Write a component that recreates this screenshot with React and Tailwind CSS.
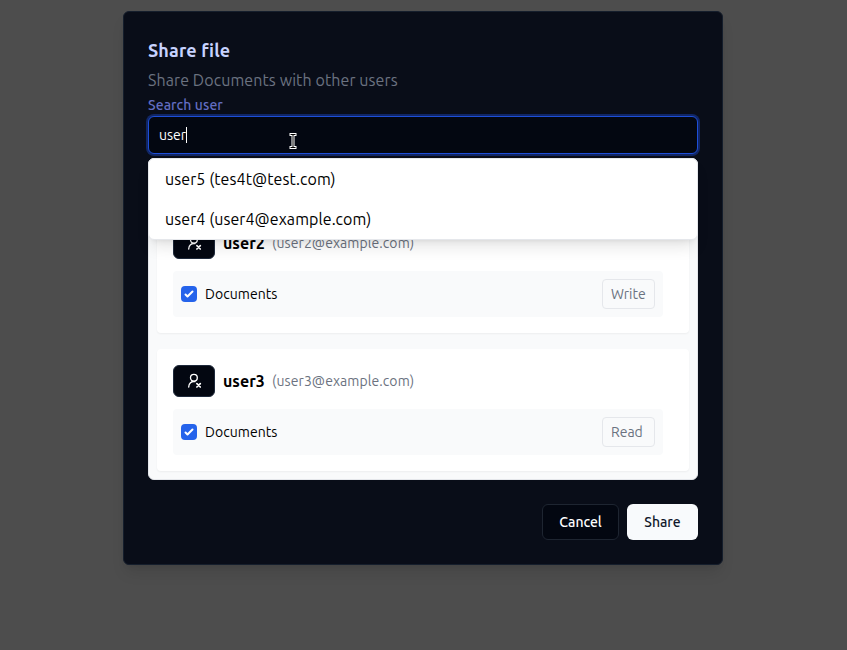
import React from 'react';

const users = [
  { name: 'user2', email: 'user2@example.com', access: 'Write' },
  { name: 'user3', email: 'user3@example.com', access: 'Read' },
];

function UserRemoveIcon() {
  return (
    <svg className="size-4" viewBox="0 0 16 16" fill="none" stroke="currentColor" strokeWidth="1.35" strokeLinecap="round">
      <circle cx="6.9" cy="4.8" r="3.4" />
      <path d="M1.7 14a5.2 5.2 0 0 1 6.2-5.4" />
      <path d="M9.9 10.6l3.4 3.4M13.3 10.6l-3.4 3.4" strokeWidth="1.7" />
    </svg>
  );
}

function UserCard({ name, email, access }) {
  return (
    <div className="h-[122px] rounded bg-white px-4 pt-4 shadow-[0_1px_2px_rgba(0,0,0,0.05)]">
      <div className="flex h-8 items-center">
        <button className="flex h-8 w-[42px] items-center justify-center rounded-md border border-[#1e293b] bg-[#030711] pl-0.5 text-white">
          <UserRemoveIcon />
        </button>
        <span className="ml-2 w-[41px] text-base font-semibold text-black">{name}</span>
        <span className="ml-2 text-sm tracking-[0.08px] text-[#6b7280]">({email})</span>
      </div>
      <div className="mt-3 flex h-[46px] w-[490px] items-center rounded bg-[#f9fafb] px-2">
        <span className="flex size-4 items-center justify-center rounded bg-[#2563eb]">
          <svg viewBox="0 0 16 16" className="size-4 fill-white">
            <path d="M12.207 4.793a1 1 0 0 1 0 1.414l-5 5a1 1 0 0 1-1.414 0l-2-2a1 1 0 0 1 1.414-1.414L6.5 9.086l4.293-4.293a1 1 0 0 1 1.414 0z" />
          </svg>
        </span>
        <span className="ml-2 text-sm tracking-[0.06px] text-black">Documents</span>
        <span className="ml-auto flex h-[30px] w-[53px] items-center rounded border border-gray-200 pl-2 text-sm text-[#6b7280]">{access}</span>
      </div>
    </div>
  );
}

export default function App() {
  return (
    <div className="h-[650px] w-[847px] overflow-hidden bg-[#4d4d4d] pt-[11px] pl-[123px] font-['Ubuntu','Noto_Sans',sans-serif]">
      <div className="flex h-[554px] w-[600px] flex-col rounded-md border border-[#151e2c] bg-[#090d18] px-6 pt-6 shadow-lg">
        <h2 className="h-7 text-lg leading-7 font-bold tracking-[0.12px] text-[#c7d2fe]">Share file</h2>
        <p className="mt-1 h-6 text-base leading-6 tracking-[0.09px] text-[#6b7280]">Share Documents with other users</p>
        <label className="mt-[3px] h-5 text-sm leading-5 font-medium tracking-[0.08px] text-[#636dc2]">Search user</label>
        <div className="relative mt-px h-[38px] shrink-0">
          <div className="flex h-[38px] items-center rounded-md border border-[#1d4ed8] bg-[#030711] pl-2.5 text-sm text-white ring-2 ring-[#1d4ed8]/40">
            <span>user</span>
            <span className="h-4 w-px bg-white" />
          </div>
          <svg className="absolute top-[16px] left-[140px] h-[18px] w-[10px]" viewBox="0 0 10 18" fill="none">
            <path d="M1.5 2.5H8.5M5 2.5V15.5M1.5 15.5H8.5" stroke="#fff" strokeWidth="3" />
            <path d="M2.5 2.5H7.5M5 2.5V15.5M2.5 15.5H7.5" stroke="#000" strokeWidth="1" />
          </svg>
          <ul className="absolute top-[42px] left-0 z-10 w-[550px] rounded-md border border-gray-200 bg-white text-base tracking-[0.08px] text-black shadow-lg">
            <li className="h-10 px-4 leading-10">user5 (tes4t@test.com)</li>
            <li className="h-10 px-4 leading-10">user4 (user4@example.com)</li>
          </ul>
        </div>
        <div className="mt-1 flex h-[322px] shrink-0 flex-col justify-end gap-4 overflow-hidden rounded-md border border-gray-200 bg-[#f9fafb] px-2 pb-2">
          {users.map((u) => <UserCard key={u.name} {...u} />)}
        </div>
        <div className="mt-6 flex justify-end gap-2 text-sm font-medium">
          <button className="h-9 w-[77px] rounded-md border border-[#1e2531] bg-[#030711] text-white">Cancel</button>
          <button className="h-9 w-[71px] rounded-md bg-slate-50 text-[#0f172a]">Share</button>
        </div>
      </div>
    </div>
  );
}
